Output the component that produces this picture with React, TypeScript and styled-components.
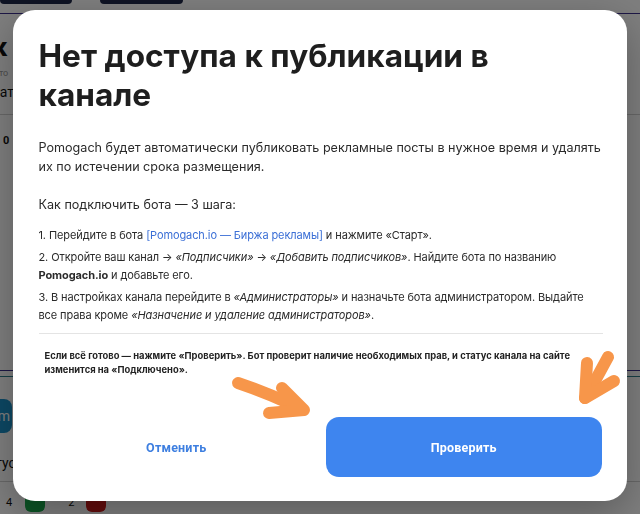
import React from "react";
import styled, { createGlobalStyle } from "styled-components";

const Global = createGlobalStyle`
  html, body { margin: 0; padding: 0; background: #ffffff; }
  body { width: 640px; height: 514px; overflow: hidden; font-family: Inter, "Noto Sans", sans-serif; }
  * { box-sizing: border-box; }
`;

/* ---------- background page (behind overlay) ---------- */
const Page = styled.div`
  width: 640px;
  height: 514px;
  overflow: hidden;
  display: flex;
  flex-direction: column;
  background: #fdfdfd;
`;

const TopBar = styled.div`
  display: flex;
  gap: 28px;
  height: 14px;
  border-bottom: 1.5px solid #3b2f8c;
  align-items: flex-start;
`;

const TopPill = styled.div<{ $w: number }>`
  width: ${(p) => p.$w}px;
  height: 4px;
  border-radius: 0 0 4px 4px;
  background: #1d2748;
`;

const BgBlock = styled.div`
  margin-left: -38px;
  padding-top: 18px;
  display: flex;
  flex-direction: column;
  gap: 6px;
  border-bottom: 1px solid #cfcfcf;
  padding-bottom: 14px;
`;

const BgTitle = styled.div`
  font-family: Roboto, sans-serif;
  font-weight: 700;
  font-size: 26px;
  color: #111;
`;

const BgSmall = styled.div`
  font-family: Roboto, sans-serif;
  font-size: 9px;
  color: #999;
  margin-left: 26px;
`;

const BgText = styled.div`
  font-family: Roboto, sans-serif;
  font-size: 14px;
  color: #111;
  margin-left: 22px;
`;

const BgZero = styled.div`
  font-family: Roboto, sans-serif;
  font-weight: 700;
  font-size: 11px;
  color: #111;
  padding: 19px 0 0 3px;
  height: 256px;
  border-bottom: 1.5px solid #3b2f8c;
`;

const BgChipRow = styled.div`
  margin-left: -50px;
  padding-top: 22px;
  display: flex;
  flex-direction: column;
  gap: 6px;
  border-top: 1px solid #2d7f8c;
  margin-top: 5px;
`;

const BgChip = styled.div`
  width: 62px;
  height: 34px;
  border-radius: 8px;
  background: #1a90c8;
  color: #fff;
  font-family: Roboto, sans-serif;
  font-size: 14px;
  display: flex;
  align-items: center;
  justify-content: flex-end;
  padding-right: 2px;
`;

const BgFooter = styled.div`
  display: flex;
  align-items: center;
  padding: 10px 0 0 6px;
  border-top: 1px solid #cfcfcf;
  margin-top: 10px;
  font-family: Roboto, sans-serif;
  font-size: 11px;
  color: #111;
`;

const Count = styled.span<{ $gap: number }>`
  margin-right: ${(p) => p.$gap}px;
`;

const Square = styled.div<{ $c: string; $gap: number }>`
  width: 20px;
  height: 20px;
  border-radius: 6px;
  background: ${(p) => p.$c};
  margin-right: ${(p) => p.$gap}px;
`;

/* ---------- overlay + modal ---------- */
const Overlay = styled.div`
  position: fixed;
  inset: 0;
  background: rgba(0, 0, 0, 0.5);
  display: flex;
  align-items: center;
  justify-content: center;
`;

const Modal = styled.div`
  position: relative;
  width: 614px;
  height: 491px;
  margin-left: -1px;
  margin-top: -3px;
  background: #ffffff;
  border-radius: 22px;
  box-shadow: 0 12px 40px rgba(0, 0, 0, 0.28);
  padding: 26px 25px 24px 26px;
  display: flex;
  flex-direction: column;
`;

const Title = styled.h2`
  margin: 0;
  font-family: Inter, sans-serif;
  font-weight: 700;
  font-size: 31.6px;
  line-height: 39px;
  color: #1e1e1e;
  letter-spacing: 0px;
  max-width: 500px;
`;

const Lead = styled.p`
  margin: 24px 0 0;
  font-family: Inter, sans-serif;
  font-size: 12.6px;
  line-height: 19px;
  color: #2a2a2a;
`;

const StepsHead = styled.p`
  margin: 19px 0 0;
  font-family: Inter, sans-serif;
  font-size: 12.6px;
  line-height: 19px;
  color: #2a2a2a;
`;

const Steps = styled.ol`
  list-style: none;
  margin: 12px 0 0;
  padding: 0;
  display: flex;
  flex-direction: column;
  gap: 4px;
`;

const Step = styled.li`
  font-family: Inter, sans-serif;
  font-size: 11px;
  line-height: 18px;
  color: #2a2a2a;
  letter-spacing: -0.1px;
`;

const Link = styled.span`
  color: #3b6fd6;
`;

const Em = styled.i`
  font-style: italic;
`;

const Strong = styled.b`
  font-weight: 700;
`;

const Divider = styled.hr`
  margin: 9px 0 0;
  border: none;
  border-top: 1px solid #e4e4e4;
  width: 564px;
`;

const Note = styled.p`
  margin: 15px 0 0;
  padding-left: 6px;
  font-family: Inter, sans-serif;
  font-weight: 700;
  font-size: 9.4px;
  line-height: 13.5px;
  color: #222;
  max-width: 560px;
`;

const Actions = styled.div`
  margin-top: auto;
  display: grid;
  grid-template-columns: 1fr 1fr;
  gap: 12px;
  width: 563px;
`;

const Button = styled.button<{ $primary?: boolean }>`
  height: 60px;
  border: none;
  border-radius: 13px;
  background: ${(p) => (p.$primary ? "#3e85ef" : "transparent")};
  color: ${(p) => (p.$primary ? "#ffffff" : "#3e7fe0")};
  font-family: Roboto, sans-serif;
  font-weight: 700;
  font-size: 12.5px;
  letter-spacing: 0.2px;
  cursor: pointer;
`;

const Arrows = styled.svg`
  position: absolute;
  left: -12px;
  top: -10px;
  width: 640px;
  height: 514px;
  pointer-events: none;
  overflow: visible;
`;

export default function App() {
  return (
    <>
      <Global />
      <Page>
        <TopBar>
          <TopPill $w={72} />
          <TopPill $w={83} />
        </TopBar>
        <BgBlock>
          <BgTitle>Рек</BgTitle>
          <BgSmall>Авто</BgSmall>
          <BgText>Статус ау</BgText>
        </BgBlock>
        <BgZero>0</BgZero>
        <BgChipRow>
          <BgChip>Pm</BgChip>
          <BgSmall>Авто</BgSmall>
          <BgText>Статус ау</BgText>
        </BgChipRow>
        <BgFooter>
          <Count $gap={13}>4</Count>
          <Square $c="#17a84a" $gap={23} />
          <Count $gap={12}>2</Count>
          <Square $c="#c81818" $gap={0} />
        </BgFooter>
      </Page>
      <Overlay>
        <Modal>
          <Title>Нет доступа к публикации в канале</Title>
          <Lead>
            Pomogach будет автоматически публиковать рекламные посты в нужное время и удалять их по
            истечении срока размещения.
          </Lead>
          <StepsHead>Как подключить бота — 3 шага:</StepsHead>
          <Steps>
            <Step>
              1. Перейдите в бота <Link>[Pomogach.io — Биржа рекламы]</Link> и нажмите «Старт».
            </Step>
            <Step>
              2. Откройте ваш канал → <Em>«Подписчики»</Em> → <Em>«Добавить подписчиков»</Em>. Найдите
              бота по названию <Strong>Pomogach.io</Strong> и добавьте его.
            </Step>
            <Step>
              3. В настройках канала перейдите в <Em>«Администраторы»</Em> и назначьте бота
              администратором. Выдайте все права кроме <Em>«Назначение и удаление администраторов»</Em>.
            </Step>
          </Steps>
          <Divider />
          <Note>
            Если всё готово — нажмите «Проверить». Бот проверит наличие необходимых прав, и статус
            канала на сайте изменится на «Подключено».
          </Note>
          <Actions>
            <Button>Отменить</Button>
            <Button $primary>Проверить</Button>
          </Actions>
          <Arrows viewBox="0 0 640 514">
            <g fill="none" stroke="#f7964a" strokeWidth="12" strokeLinecap="round" strokeLinejoin="round">
              <path d="M237 383 Q270 394 302 410" />
              <path d="M281 388 L303 410 L268 413" />
              <path d="M607 357 Q596 378 584 398" />
              <path d="M586 363 L584 398 L613 381" />
            </g>
          </Arrows>
        </Modal>
      </Overlay>
    </>
  );
}
